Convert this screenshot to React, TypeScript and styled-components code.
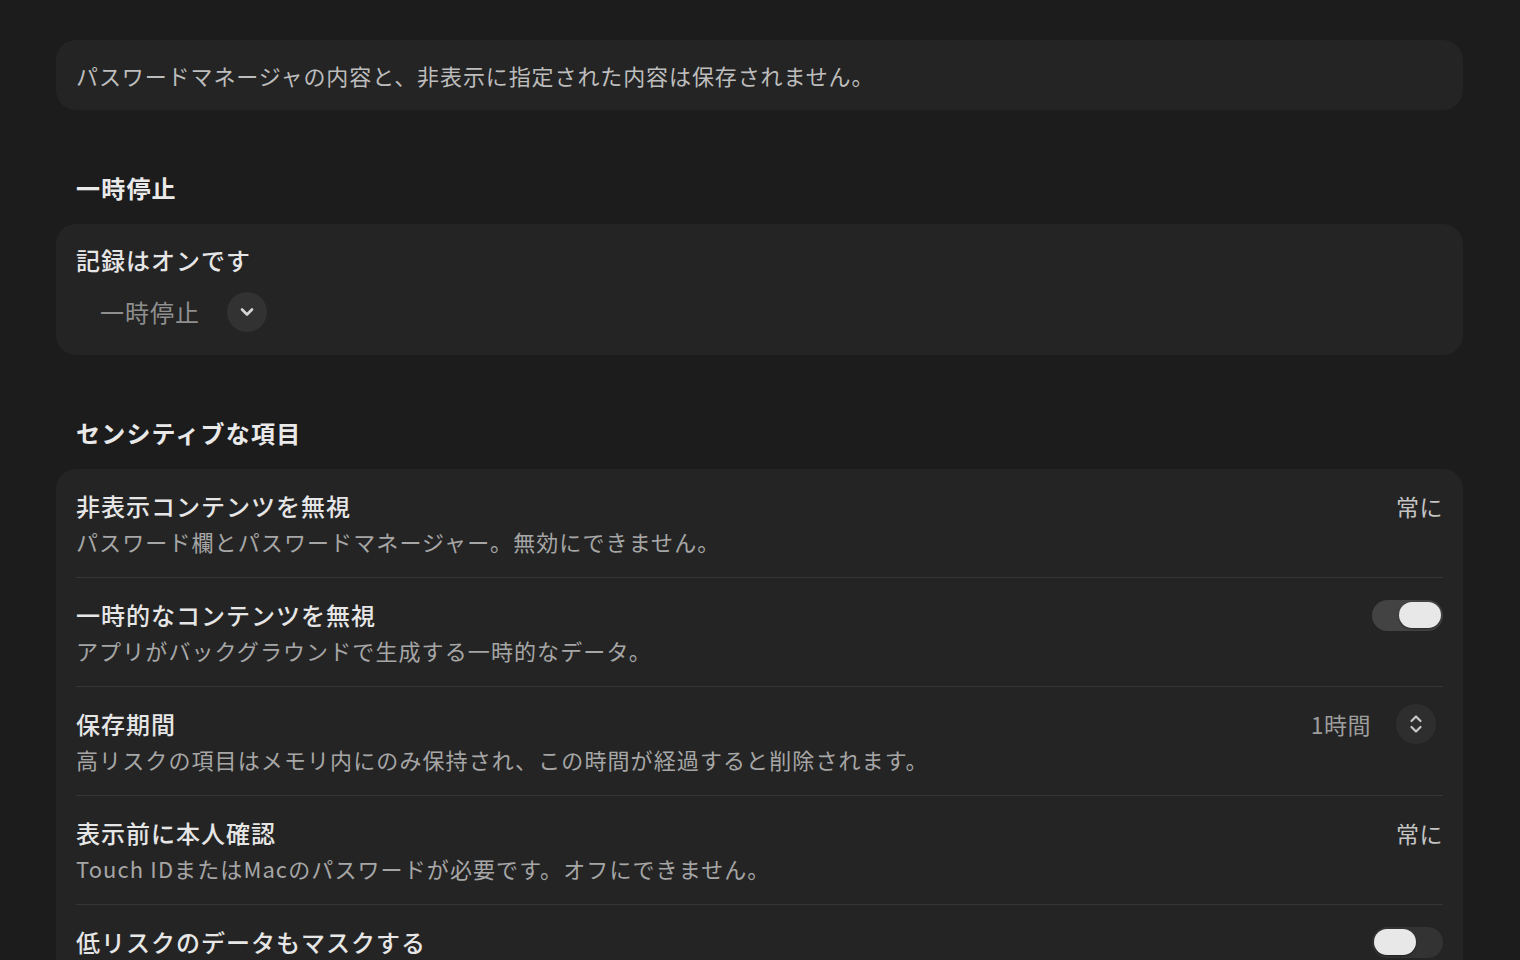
import React from "react";
import styled, { createGlobalStyle } from "styled-components";

const GlobalStyle = createGlobalStyle`
  html, body {
    margin: 0;
    padding: 0;
    background: #1c1c1c;
  }
  body {
    font-family: "Noto Sans CJK JP", "Noto Sans", "Liberation Sans", sans-serif;
    -webkit-font-smoothing: antialiased;
  }
`;

const Page = styled.div`
  padding: 40px 57px 40px 56px;
  display: flex;
  flex-direction: column;
`;

const Card = styled.section`
  background: #242424;
  border-radius: 20px;
  padding: 0 20px;
`;

const NoteCard = styled(Card)`
  height: 70px;
  display: flex;
  align-items: center;
`;

const NoteText = styled.p`
  margin: 0;
  font-size: 22px;
  letter-spacing: 0.9px;
  color: #bdbdbd;
  line-height: 30px;
`;

const SectionTitle = styled.h2`
  margin: 62px 0 20px 20px;
  font-size: 24px;
  line-height: 32px;
  letter-spacing: 1.2px;
  font-weight: 700;
  color: #e9e9e9;
`;

const PauseCard = styled(Card)`
  padding: 21px 20px 23px;
  display: flex;
  flex-direction: column;
  gap: 17px;
`;

const RowTitle = styled.div`
  font-size: 24px;
  line-height: 30px;
  letter-spacing: 1px;
  font-weight: 500;
  color: #e6e6e6;
`;

const PopupButton = styled.button`
  display: flex;
  align-items: center;
  gap: 27px;
  background: none;
  border: none;
  padding: 0 0 0 24px;
  font-family: inherit;
  font-size: 24px;
  line-height: 40px;
  letter-spacing: 1px;
  color: #8f8f8f;
  cursor: pointer;
  align-self: flex-start;
`;

const RoundIcon = styled.span<{ $bg?: string }>`
  width: 40px;
  height: 40px;
  border-radius: 50%;
  background: ${(p) => p.$bg || "#323232"};
  display: flex;
  align-items: center;
  justify-content: center;
  flex-shrink: 0;
`;

const ListCard = styled(Card)`
  padding-bottom: 40px;
`;

const Row = styled.div<{ $last?: boolean }>`
  display: flex;
  justify-content: space-between;
  align-items: flex-start;
  padding: 22px 0 21px;
  border-bottom: ${(p) => (p.$last ? "none" : "1px solid #353535")};
`;

const RowText = styled.div`
  display: flex;
  flex-direction: column;
  gap: 5px;
`;

const RowSub = styled.div`
  font-size: 22px;
  line-height: 30px;
  letter-spacing: 1.1px;
  color: #a6a6a6;
`;

const Control = styled.div`
  height: 30px;
  display: flex;
  align-items: center;
  gap: 25px;
`;

const ValueText = styled.span<{ $dim?: boolean }>`
  font-size: 23px;
  letter-spacing: 0.5px;
  color: ${(p) => (p.$dim ? "#9d9d9d" : "#c4c4c4")};
`;

const StepperWrap = styled.span`
  margin-right: 7px;
  display: flex;
`;

const Track = styled.span<{ $on: boolean }>`
  width: 71px;
  height: 31px;
  border-radius: 16px;
  background: ${(p) => (p.$on ? "#434343" : "#333333")};
  display: flex;
  align-items: center;
  justify-content: ${(p) => (p.$on ? "flex-end" : "flex-start")};
  padding: 0 2px;
  box-sizing: border-box;
`;

const Knob = styled.span`
  width: 42px;
  height: 26px;
  border-radius: 13px;
  background: #e8e8e8;
  box-shadow: 0 1px 2px rgba(0, 0, 0, 0.4);
`;

const Toggle = ({ on }: { on: boolean }) => (
  <Track $on={on}>
    <Knob />
  </Track>
);

const ChevronDown = () => (
  <svg width="16" height="12" viewBox="0 0 16 12" fill="none">
    <path d="M3 3.5 L8 8.5 L13 3.5" stroke="#d6d6d6" strokeWidth="2.6" strokeLinecap="round" strokeLinejoin="round" />
  </svg>
);

const UpDown = () => (
  <svg width="14" height="22" viewBox="0 0 14 22" fill="none">
    <path d="M2.5 8 L7 3.5 L11.5 8" stroke="#c8c8c8" strokeWidth="2.2" strokeLinecap="round" strokeLinejoin="round" />
    <path d="M2.5 14 L7 18.5 L11.5 14" stroke="#c8c8c8" strokeWidth="2.2" strokeLinecap="round" strokeLinejoin="round" />
  </svg>
);

export default function App() {
  return (
    <>
      <GlobalStyle />
      <Page>
        <NoteCard>
          <NoteText>パスワードマネージャの内容と、非表示に指定された内容は保存されません。</NoteText>
        </NoteCard>

        <SectionTitle>一時停止</SectionTitle>
        <PauseCard>
          <RowTitle>記録はオンです</RowTitle>
          <PopupButton>
            一時停止
            <RoundIcon>
              <ChevronDown />
            </RoundIcon>
          </PopupButton>
        </PauseCard>

        <SectionTitle>センシティブな項目</SectionTitle>
        <ListCard>
          <Row>
            <RowText>
              <RowTitle>非表示コンテンツを無視</RowTitle>
              <RowSub>パスワード欄とパスワードマネージャー。無効にできません。</RowSub>
            </RowText>
            <Control>
              <ValueText>常に</ValueText>
            </Control>
          </Row>
          <Row>
            <RowText>
              <RowTitle>一時的なコンテンツを無視</RowTitle>
              <RowSub>アプリがバックグラウンドで生成する一時的なデータ。</RowSub>
            </RowText>
            <Control>
              <Toggle on />
            </Control>
          </Row>
          <Row>
            <RowText>
              <RowTitle>保存期間</RowTitle>
              <RowSub>高リスクの項目はメモリ内にのみ保持され、この時間が経過すると削除されます。</RowSub>
            </RowText>
            <Control>
              <ValueText $dim>1時間</ValueText>
              <StepperWrap>
                <RoundIcon $bg="#2e2e2e">
                  <UpDown />
                </RoundIcon>
              </StepperWrap>
            </Control>
          </Row>
          <Row>
            <RowText>
              <RowTitle>表示前に本人確認</RowTitle>
              <RowSub>Touch IDまたはMacのパスワードが必要です。オフにできません。</RowSub>
            </RowText>
            <Control>
              <ValueText>常に</ValueText>
            </Control>
          </Row>
          <Row $last>
            <RowText>
              <RowTitle>低リスクのデータもマスクする</RowTitle>
            </RowText>
            <Control>
              <Toggle on={false} />
            </Control>
          </Row>
        </ListCard>
      </Page>
    </>
  );
}
